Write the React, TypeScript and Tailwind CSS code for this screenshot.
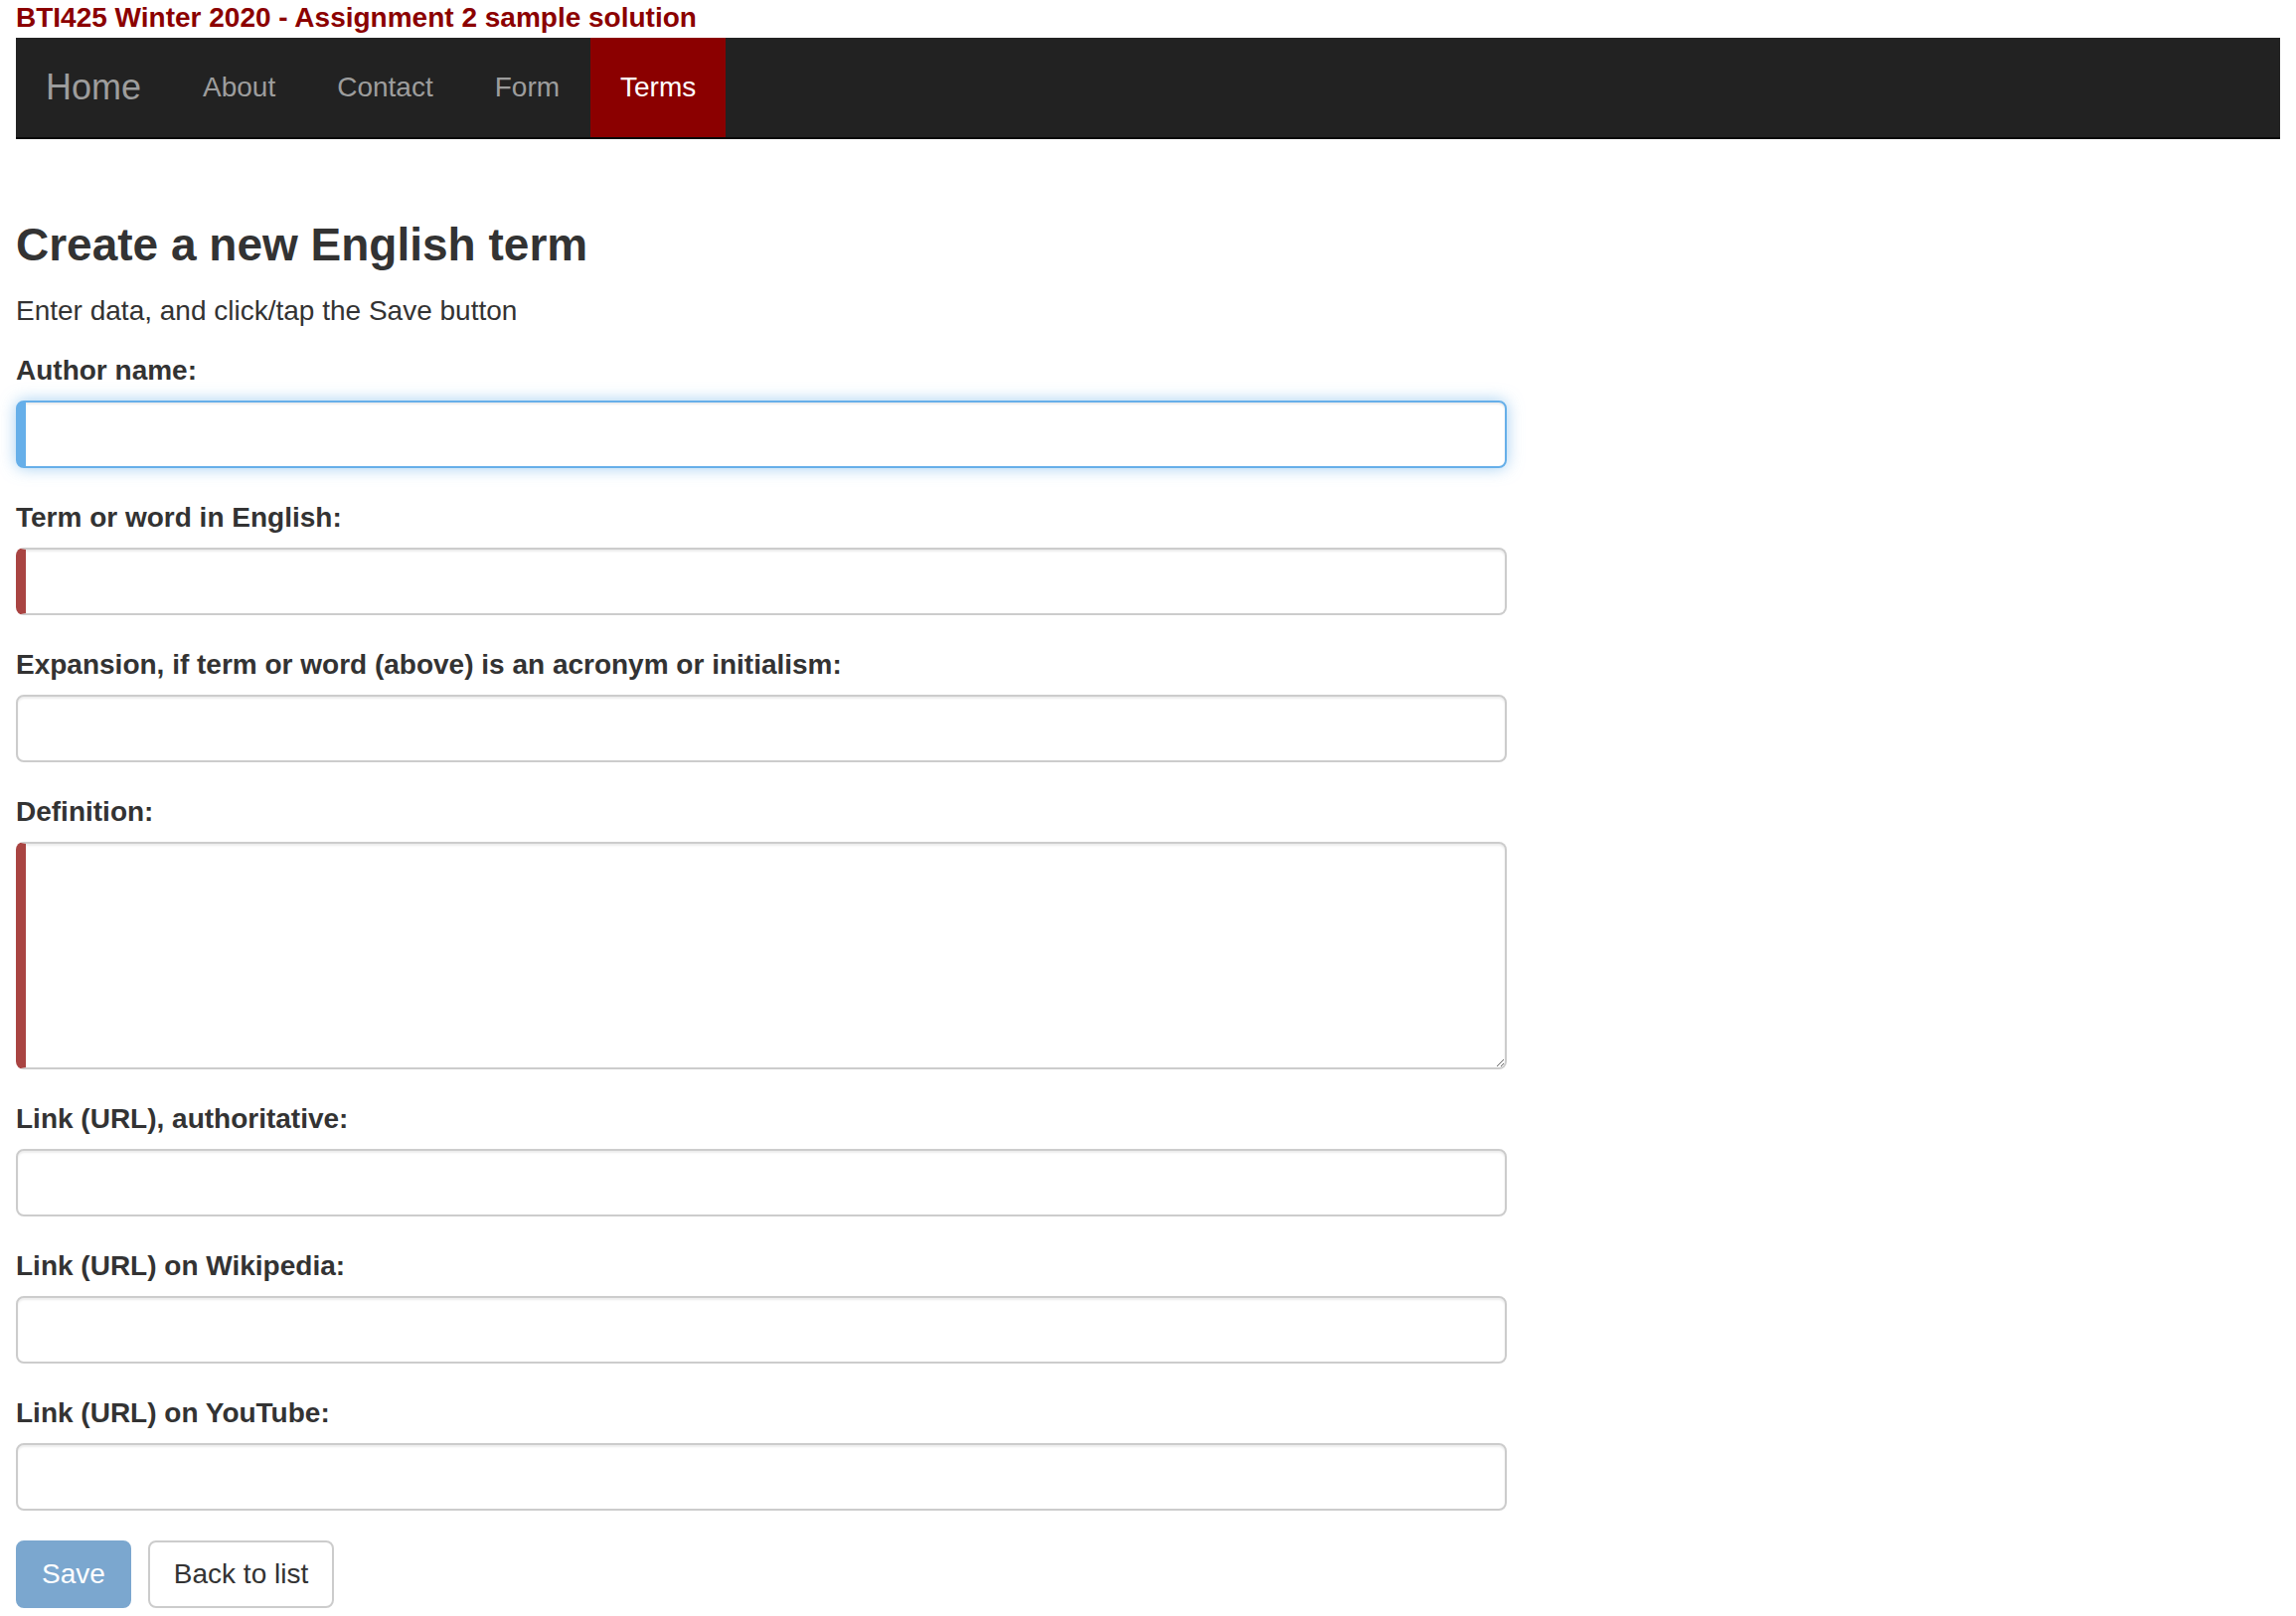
import React from 'react';

type Field = {
  label: string;
  kind?: 'input' | 'textarea';
  required?: boolean;
  focused?: boolean;
};

const FIELDS: Field[] = [
  { label: 'Author name:', required: true, focused: true },
  { label: 'Term or word in English:', required: true },
  { label: 'Expansion, if term or word (above) is an acronym or initialism:' },
  { label: 'Definition:', kind: 'textarea', required: true },
  { label: 'Link (URL), authoritative:' },
  { label: 'Link (URL) on Wikipedia:' },
  { label: 'Link (URL) on YouTube:' },
];

const NAV = ['About', 'Contact', 'Form'];

const fieldClass = (f: Field) => {
  const base =
    'block w-full rounded-[8px] border-2 bg-white px-[24px] text-[28px] text-[#555] outline-none';
  if (f.focused) {
    return (
      base +
      ' border-[#66afe9] border-l-[10px] shadow-[inset_0_2px_2px_rgba(0,0,0,0.075),0_0_16px_rgba(102,175,233,0.6)]'
    );
  }
  if (f.required) {
    return base + ' border-[#ccc] border-l-[10px] border-l-[#a94442] shadow-[inset_0_2px_2px_rgba(0,0,0,0.075)]';
  }
  return base + ' border-[#ccc] shadow-[inset_0_2px_2px_rgba(0,0,0,0.075)]';
};

const App: React.FC = () => {
  return (
    <div className="min-h-screen bg-white px-[16px] pb-[20px] font-['Liberation_Sans',Arial,Helvetica,sans-serif] text-[#333]">
      <div className="h-[38px] text-[28px] font-bold leading-[35px] text-[#8b0000]">
        BTI425 Winter 2020 - Assignment 2 sample solution
      </div>

      <nav className="flex h-[102px] border-b-2 border-[#080808] bg-[#222]">
        <a className="flex items-center pl-[30px] pr-[31px] text-[36px] text-[#9d9d9d]">Home</a>
        {NAV.map((item) => (
          <a key={item} className="flex items-center px-[31px] text-[28px] text-[#9d9d9d]">
            {item}
          </a>
        ))}
        <a className="flex items-center bg-[#8b0000] px-[30px] text-[28px] text-white">Terms</a>
      </nav>

      <main className="w-[1500px] pt-[80px]">
        <h3 className="text-[46px] font-semibold leading-[53px]">Create a new English term</h3>
        <p className="mt-[20px] text-[28px] leading-[40px]">Enter data, and click/tap the Save button</p>

        <form className="mt-[20px]" onSubmit={(e) => e.preventDefault()}>
          {FIELDS.map((f) => (
            <div key={f.label} className="mb-[30px]">
              <label className="mb-[10px] block text-[28px] font-bold leading-[40px]">{f.label}</label>
              {f.kind === 'textarea' ? (
                <textarea rows={5} className={fieldClass(f) + ' h-[229px] py-[12px]'} />
              ) : (
                <input type="text" className={fieldClass(f) + ' h-[68px]'} />
              )}
            </div>
          ))}

          <div className="flex gap-[17px]">
            <button
              type="submit"
              className="h-[68px] rounded-[8px] border-2 border-[#7ba7cf] bg-[#7ba7cf] px-[24px] text-[28px] text-white"
            >
              Save
            </button>
            <button
              type="button"
              className="h-[68px] rounded-[8px] border-2 border-[#ccc] bg-white px-[24px] text-[28px] text-[#333]"
            >
              Back to list
            </button>
          </div>
        </form>
      </main>
    </div>
  );
};

export default App;
